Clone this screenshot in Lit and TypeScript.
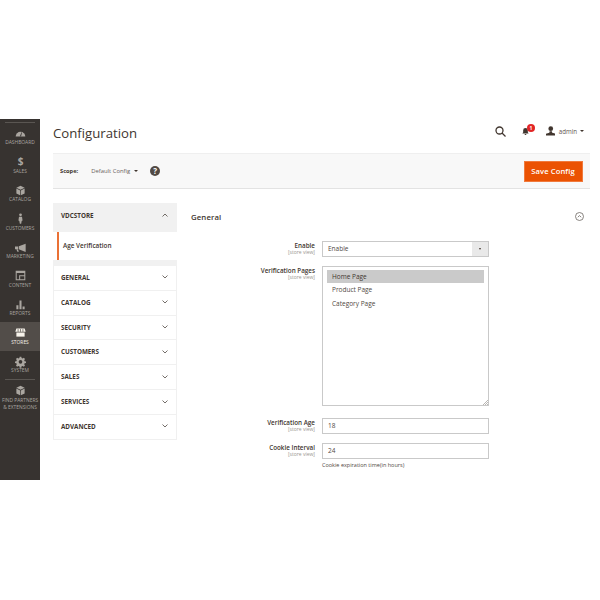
import { LitElement, html, css, svg } from "lit";
import { customElement } from "lit/decorators.js";

const ICONS: Record<string, unknown> = {
  dashboard: svg`<path d="M1 12.500a7 7 0 0 1 14 0z"/><path d="M7.200 12l2.300-6 .8.3L8.700 12.500z" fill="#373330"/>`,
  sales: svg`<text x="8" y="13.500" text-anchor="middle" font-family="Open Sans" font-weight="700" font-size="14.500">$</text>`,
  catalog: svg`<path d="M8 1l6 3-6 3-6-3z"/><path d="M2 5.200l5.500 2.800V15L2 12.200zM14 5.200L8.500 8v7l5.500-2.800z"/>`,
  customers: svg`<circle cx="8" cy="2.600" r="2"/><path d="M5.800 5.500h4.400l.8 5.500-1.300.8-.7 3.700H7l-.7-3.700-1.300-.8z"/>`,
  marketing: svg`<path d="M0 6.500h4.500v4H0zM5.500 6L15.500 2.500v12L5.500 10.500zM2 11h2.500l1 3h-2z"/>`,
  content: svg`<path fill-rule="evenodd" d="M1 1h14v14H1zM2.500 4.500v9h3.500V7.500h7.500v-3zM7.500 9v4.500h6V9z"/>`,
  reports: svg`<path d="M2 9h3v6H2zM6.500 2h3v13h-3zM11 11h3v4h-3z"/>`,
  stores: svg`<path d="M2 2h12l1.500 5H.5z"/><path d="M2 8h12v6H2z"/><path d="M4.500 3v4M8 3v4M11.500 3v4" stroke="#524d49" stroke-width="1" fill="none"/>`,
  system: svg`<path fill-rule="evenodd" d="M6.800 1h2.400l.4 2 1.500.7 1.800-1.100 1.600 1.700-1.100 1.700.6 1.500 2 .4v2.300l-2 .5-.6 1.400 1.100 1.800-1.600 1.600-1.800-1.100-1.500.6-.4 2H6.800l-.4-2-1.500-.6-1.800 1.100-1.600-1.600 1.100-1.800-.6-1.400-2-.5V7.900l2-.4.6-1.500-1.100-1.700 1.600-1.700 1.800 1.100 1.500-.7zM8 5.800a2.700 2.700 0 1 0 0 5.400 2.700 2.700 0 0 0 0-5.400z"/>`,
};

const NAV_TOP = [
  ["dashboard", "Dashboard"],
  ["sales", "Sales"],
  ["catalog", "Catalog"],
  ["customers", "Customers"],
  ["marketing", "Marketing"],
  ["content", "Content"],
  ["reports", "Reports"],
  ["stores", "Stores"],
  ["system", "System"],
];

const SECTIONS = ["General", "Catalog", "Security", "Customers", "Sales", "Services", "Advanced"];
const PAGES = ["Home Page", "Product Page", "Category Page"];

@customElement("app-root")
export class AppRoot extends LitElement {
  static styles = css`
    :host {
      display: block;
      width: 600px;
      height: 600px;
      overflow: hidden;
      background: #fff;
      font-family: "Open Sans", sans-serif;
      color: #41362f;
    }
    .page { display: flex; padding-top: 119px; align-items: flex-start; }
    .side {
      width: 40px; height: 361px; flex: none; background: #373330;
      display: flex; flex-direction: column; align-items: stretch;
      box-sizing: border-box;
    }
    .rule { height: 1px; background: #5a5652; margin: 0 5px; flex: none; }
    .rule.top { margin-top: 2.500px; }
    .item {
      height: 28.500px; flex: none; display: flex; flex-direction: column; align-items: center;
      justify-content: flex-start; padding-top: 5px; box-sizing: border-box;
      color: #aaa6a0; font-size: 4.900px; line-height: 6px; text-transform: uppercase;
      text-align: center; white-space: nowrap;
    }
    .item svg { width: 11px; height: 11px; fill: #aaa6a0; display: block; margin-bottom: .5px; overflow: visible; }
    .item.on { background: #524d49; color: #f7f3eb; }
    .item.on svg { fill: #f7f3eb; }
    .item.ext { height: auto; padding-top: 5px; line-height: 6.500px; }
    .item.ext svg { margin-bottom: 1px; }
    .main { flex: 1; min-width: 0; padding: 0 10px 0 13px; }
    .head { height: 34px; box-sizing: border-box; padding-bottom: 6px; display: flex; align-items: center; }
    .title { font-size: 13.200px; font-weight: 400; line-height: 20px; margin: 0; flex: 1; color: #41362f; }
    .tools { display: flex; align-items: center; margin: 0 6px 4px 0; }
    .search { width: 11px; height: 11px; margin-right: 16px; fill: none; stroke: #41362f; stroke-width: 1.300; }
    .bell { position: relative; width: 7px; height: 9px; margin-right: 17px; }
    .bell svg { display: block; width: 7px; height: 9px; fill: #41362f; }
    .badge {
      position: absolute; left: 5px; top: -3px; width: 8.500px; height: 8.500px; border-radius: 50%;
      background: #e22626; color: #fff; font-size: 5px; font-weight: 700; line-height: 8.500px; text-align: center;
    }
    .user { width: 9.500px; height: 9.500px; fill: #41362f; margin-right: 3.500px; }
    .admin { font-size: 6.200px; color: #5f5650; }
    .caret { width: 0; height: 0; border: 2px solid transparent; border-top: 2.300px solid #41362f; border-bottom: 0; }
    .admin + .caret { margin-left: 3px; }
    .bar {
      height: 36px; background: #f8f8f8; border-top: 1px solid #efefef; border-bottom: 1px solid #e3e3e3;
      box-sizing: border-box; display: flex; align-items: center; padding: 0 7.500px 0 7px;
    }
    .scope { font-size: 5.700px; font-weight: 700; margin-right: 13px; }
    .cfg { font-size: 5.900px; color: #6a625c; margin-right: 4px; }
    .bar .caret { margin-right: 12px; }
    .help {
      width: 10px; height: 10px; border-radius: 50%; background: #514943; color: #fff; font-size: 8px;
      font-weight: 700; line-height: 10px; text-align: center; flex: none;
    }
    .save {
      margin-left: auto; width: 59px; height: 21px; box-sizing: border-box; background: #eb5202; color: #fff;
      border: 1px solid #f07a3c; font-size: 7.600px; font-weight: 600; display: flex; align-items: center; justify-content: center;
      letter-spacing: .1px;
    }
    .cols { display: flex; margin-top: 14px; }
    .tabs { width: 124px; flex: none; }
    .tab-head {
      height: 29px; background: #f1f1f1; display: flex; align-items: center; justify-content: space-between;
      padding: 0 9px 5px 8px; box-sizing: border-box; font-size: 6.300px; font-weight: 700; color: #41362f;
    }
    .tab-head svg, .sec svg { width: 6px; height: 4px; fill: none; stroke: #514943; stroke-width: .8; }
    .sub {
      height: 28px; box-sizing: border-box; margin-left: 4px; border-left: 2px solid #ea7135; display: flex;
      align-items: center; padding: 0 0 1px 4px; font-size: 6.400px; font-weight: 600; color: #41362f;
    }
    .gap { height: 6px; background: #f1f1f1; }
    .sec {
      height: 24.830px; box-sizing: border-box; border: 1px solid #f0f0f0; border-top: 0; background: #fff;
      display: flex; align-items: center; justify-content: space-between; padding: 0 8px 1px 7px;
      font-size: 6.300px; font-weight: 700; color: #41362f;
    }
    .form { flex: 1; min-width: 0; padding-left: 14px; }
    .g-head { height: 27px; display: flex; align-items: center; justify-content: space-between; padding-right: 6px; }
    .g-title { font-size: 7.800px; font-weight: 600; color: #41362f; letter-spacing: .1px; }
    .g-toggle { width: 9px; height: 9px; fill: none; stroke: #6b6560; stroke-width: .8; }
    .row { display: flex; }
    .lab { width: 124px; text-align: right; flex: none; padding-top: .5px; }
    .lab b { display: block; font-size: 6.300px; line-height: 8px; font-weight: 600; color: #41362f; }
    .lab i { display: block; font-size: 5px; line-height: 5px; font-style: normal; color: #9a9590; }
    .ctl { margin-left: 7px; width: 167px; }
    .sel {
      height: 15.500px; border: 1px solid #c9c9c9; box-sizing: border-box; display: flex; align-items: center;
      font-size: 6.500px; color: #514943; padding-left: 5px;
    }
    .sel span { flex: 1; }
    .arrow { width: 16px; height: 13.500px; background: #e9e9e9; display: flex; align-items: center; justify-content: center; }
    .arrow .caret { border-top-color: #41362f; border-width: 1.800px; border-top-width: 2px; border-bottom: 0; }
    .multi {
      height: 140px; border: 1px solid #c9c9c9; box-sizing: border-box; padding: 3px 4px; position: relative;
      font-size: 6.500px; color: #514943;
    }
    .opt { height: 13.300px; display: flex; align-items: center; padding-left: 5px; }
    .opt.sel-on { background: #cacaca; color: #41362f; }
    .grip { position: absolute; right: 0; bottom: 0; width: 5px; height: 5px; }
    .grip svg { display: block; width: 5px; height: 5px; stroke: #8a8580; stroke-width: .6; }
    .note { font-size: 5.500px; line-height: 7px; margin-top: 3px; color: #514943; }
  `;

  private chev(up: boolean) {
    return html`<svg viewBox="0 0 6 4"><path d=${up ? "M.5 3.500L3 1l2.500 2.500" : "M.5 .5L3 3l2.500-2.500"}></path></svg>`;
  }

  private navItem(key: string, label: string) {
    return html`<div class="item ${key === "stores" ? "on" : ""}">
      <svg viewBox="0 0 16 16">${ICONS[key]}</svg>${label}
    </div>`;
  }

  private field(name: string, body: unknown, gap: number) {
    return html`<div class="row" style="margin-top:${gap}px">
      <div class="lab"><b>${name}</b><i>[store view]</i></div>
      <div class="ctl">${body}</div>
    </div>`;
  }

  render() {
    return html`<div class="page">
      <nav class="side">
        <div class="rule top"></div>
        ${NAV_TOP.map(([k, l]) => this.navItem(k, l))}
        <div class="rule"></div>
        <div class="item ext">
          <svg viewBox="0 0 16 16">${ICONS.catalog}</svg>Find Partners<br />&amp; Extensions
        </div>
      </nav>
      <div class="main">
        <div class="head">
          <h1 class="title">Configuration</h1>
          <div class="tools">
            <svg class="search" viewBox="0 0 11 11"><circle cx="4.500" cy="4.500" r="3.500"></circle><path d="M7 7l3.500 3.500"></path></svg>
            <div class="bell">
              <svg viewBox="0 0 9 10"><path d="M4.500 .5a3 3 0 0 1 3 3V6l1 1.500H.5L1.500 6V3.500a3 3 0 0 1 3-3zM3.300 8.300h2.400a1.200 1.200 0 0 1-2.400 0z"></path></svg>
              <div class="badge">1</div>
            </div>
            <svg class="user" viewBox="0 0 10 10"><circle cx="5" cy="2.800" r="2.500"></circle><path d="M3.800 5.500h2.400L6.500 7 10 8.200V10H0V8.200L3.500 7z"></path></svg>
            <span class="admin">admin</span><span class="caret"></span>
          </div>
        </div>
        <div class="bar">
          <span class="scope">Scope:</span>
          <span class="cfg">Default Config</span><span class="caret"></span>
          <span class="help">?</span>
          <div class="save">Save Config</div>
        </div>
        <div class="cols">
          <aside class="tabs">
            <div class="tab-head">VDCSTORE ${this.chev(true)}</div>
            <div class="sub">Age Verification</div>
            <div class="gap"></div>
            ${SECTIONS.map((s) => html`<div class="sec">${s.toUpperCase()} ${this.chev(false)}</div>`)}
          </aside>
          <section class="form">
            <div class="g-head">
              <span class="g-title">General</span>
              <svg class="g-toggle" viewBox="0 0 9 9"><circle cx="4.500" cy="4.500" r="4"></circle><path d="M2.800 5.200L4.500 3.600l1.700 1.600"></path></svg>
            </div>
            ${this.field(
              "Enable",
              html`<div class="sel"><span>Enable</span><div class="arrow"><i class="caret"></i></div></div>`,
              11
            )}
            ${this.field(
              "Verification Pages",
              html`<div class="multi">
                ${PAGES.map((p, i) => html`<div class="opt ${i === 0 ? "sel-on" : ""}">${p}</div>`)}
                <div class="grip"><svg viewBox="0 0 5 5"><path d="M0 5L5 0M2 5l3-3M4 5l1-1"></path></svg></div>
              </div>`,
              9.500
            )}
            ${this.field("Verification Age", html`<div class="sel"><span>18</span></div>`, 12)}
            ${this.field(
              "Cookie Interval",
              html`<div class="sel"><span>24</span></div><div class="note">Cookie expiration time(in hours)</div>`,
              9.500
            )}
          </section>
        </div>
      </div>
    </div>`;
  }
}
